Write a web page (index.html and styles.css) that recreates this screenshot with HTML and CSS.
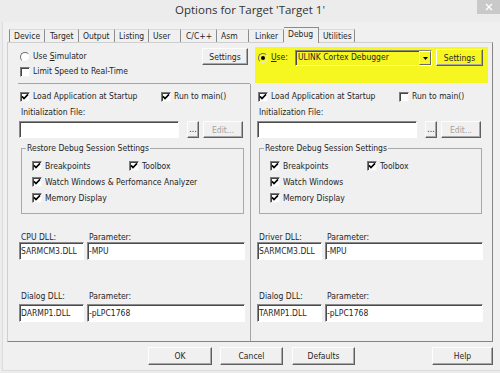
FILE: index.html
```html
<!DOCTYPE html>
<html lang="en">
<head>
<meta charset="utf-8">
<title>Options for Target 'Target 1'</title>
<link rel="stylesheet" href="styles.css">
</head>
<body>
<div class="window">
  <header class="titlebar">
    <span class="title">Options for Target 'Target 1'</span>
    <span class="close"><svg width="8" height="8" viewBox="0 0 8 8"><path d="M1 1L7 7M7 1L1 7" stroke="#fff" stroke-width="1.4"/></svg></span>
  </header>
  <div class="client">
    <nav class="tabs">
      <span class="tab">Device</span>
      <span class="tab">Target</span>
      <span class="tab">Output</span>
      <span class="tab">Listing</span>
      <span class="tab">User</span>
      <span class="tab">C/C++</span>
      <span class="tab">Asm</span>
      <span class="tab">Linker</span>
      <span class="tab sel">Debug</span>
      <span class="tab">Utilities</span>
    </nav>
    <section class="panel">
      <div class="top top-left">
        <div class="toprow">
          <span class="opt"><span class="rb"></span><span>Use <u>S</u>imulator</span></span>
          <span class="btn settings">Settings</span>
        </div>
        <span class="opt limit"><span class="cb"></span>Limit Speed to Real-Time</span>
      </div>
      <div class="top top-right">
        <div class="hl">
          <span class="rb on"><span class="dot"></span></span>
          <span class="use"><u>U</u>se:</span>
          <span class="select"><span class="sel-text">ULINK Cortex Debugger</span><span class="arrow"><svg width="5" height="3" viewBox="0 0 5 3"><path d="M0 0H5L2.5 3Z" fill="#000"/></svg></span></span>
          <span class="btn settings">Settings</span>
        </div>
      </div>

      <div class="col col-left">
        <div class="optrow">
          <span class="opt load"><span class="cb"><svg width="8" height="8" viewBox="0 0 8 8"><path d="M1 3.4L3 5.6L7 1.4" fill="none" stroke="#000" stroke-width="1.6"/></svg></span>Load Application at Startup</span>
          <span class="opt"><span class="cb"><svg width="8" height="8" viewBox="0 0 8 8"><path d="M1 3.4L3 5.6L7 1.4" fill="none" stroke="#000" stroke-width="1.6"/></svg></span>Run to main()</span>
        </div>
        <div class="lbl init">Initialization File:</div>
        <div class="filerow">
          <span class="field"></span>
          <span class="btn dots">...</span>
          <span class="btn edit">Edit...</span>
        </div>
        <fieldset class="group">
          <legend>Restore Debug Session Settings</legend>
          <div class="grow">
            <span class="opt bp"><span class="cb"><svg width="8" height="8" viewBox="0 0 8 8"><path d="M1 3.4L3 5.6L7 1.4" fill="none" stroke="#000" stroke-width="1.6"/></svg></span>Breakpoints</span>
            <span class="opt"><span class="cb"><svg width="8" height="8" viewBox="0 0 8 8"><path d="M1 3.4L3 5.6L7 1.4" fill="none" stroke="#000" stroke-width="1.6"/></svg></span>Toolbox</span>
          </div>
          <div class="grow">
            <span class="opt"><span class="cb"><svg width="8" height="8" viewBox="0 0 8 8"><path d="M1 3.4L3 5.6L7 1.4" fill="none" stroke="#000" stroke-width="1.6"/></svg></span>Watch Windows &amp; Perfomance Analyzer</span>
          </div>
          <div class="grow">
            <span class="opt"><span class="cb"><svg width="8" height="8" viewBox="0 0 8 8"><path d="M1 3.4L3 5.6L7 1.4" fill="none" stroke="#000" stroke-width="1.6"/></svg></span>Memory Display</span>
          </div>
        </fieldset>
        <div class="dll-labels first"><span>CPU DLL:</span><span>Parameter:</span></div>
        <div class="dll-fields"><span class="field">SARMCM3.DLL</span><span class="field">-MPU</span></div>
        <div class="dll-labels second"><span>Dialog DLL:</span><span>Parameter:</span></div>
        <div class="dll-fields"><span class="field">DARMP1.DLL</span><span class="field">-pLPC1768</span></div>
      </div>

      <div class="col col-right">
        <div class="optrow">
          <span class="opt load"><span class="cb"><svg width="8" height="8" viewBox="0 0 8 8"><path d="M1 3.4L3 5.6L7 1.4" fill="none" stroke="#000" stroke-width="1.6"/></svg></span>Load Application at Startup</span>
          <span class="opt"><span class="cb"></span>Run to main()</span>
        </div>
        <div class="lbl init">Initialization File:</div>
        <div class="filerow">
          <span class="field"></span>
          <span class="btn dots">...</span>
          <span class="btn edit">Edit...</span>
        </div>
        <fieldset class="group">
          <legend>Restore Debug Session Settings</legend>
          <div class="grow">
            <span class="opt bp"><span class="cb"><svg width="8" height="8" viewBox="0 0 8 8"><path d="M1 3.4L3 5.6L7 1.4" fill="none" stroke="#000" stroke-width="1.6"/></svg></span>Breakpoints</span>
            <span class="opt"><span class="cb"><svg width="8" height="8" viewBox="0 0 8 8"><path d="M1 3.4L3 5.6L7 1.4" fill="none" stroke="#000" stroke-width="1.6"/></svg></span>Toolbox</span>
          </div>
          <div class="grow">
            <span class="opt"><span class="cb"><svg width="8" height="8" viewBox="0 0 8 8"><path d="M1 3.4L3 5.6L7 1.4" fill="none" stroke="#000" stroke-width="1.6"/></svg></span>Watch Windows</span>
          </div>
          <div class="grow">
            <span class="opt"><span class="cb"><svg width="8" height="8" viewBox="0 0 8 8"><path d="M1 3.4L3 5.6L7 1.4" fill="none" stroke="#000" stroke-width="1.6"/></svg></span>Memory Display</span>
          </div>
        </fieldset>
        <div class="dll-labels first"><span>Driver DLL:</span><span>Parameter:</span></div>
        <div class="dll-fields"><span class="field">SARMCM3.DLL</span><span class="field">-MPU</span></div>
        <div class="dll-labels second"><span>Dialog DLL:</span><span>Parameter:</span></div>
        <div class="dll-fields"><span class="field">TARMP1.DLL</span><span class="field">-pLPC1768</span></div>
      </div>
    </section>
    <div class="buttons">
      <span class="btn big">OK</span>
      <span class="btn big">Cancel</span>
      <span class="btn big">Defaults</span>
      <span class="btn big help">Help</span>
    </div>
  </div>
</div>
</body>
</html>
```

FILE: styles.css
```css
* { box-sizing: border-box; }
html, body { margin: 0; padding: 0; }
body {
  width: 500px;
  height: 373px;
  overflow: hidden;
  background: #ececec;
  font-family: "DejaVu Sans Condensed", "DejaVu Sans", sans-serif;
  font-size: 8.5px;
  color: #262626;
}
u { text-decoration: underline; text-underline-offset: 1px; }

.titlebar {
  height: 22px;
  display: grid;
  grid-template-columns: 1fr auto 1fr;
}
.title {
  grid-column: 2;
  font-family: "Open Sans", "Liberation Sans", sans-serif;
  font-size: 11.5px;
  line-height: 20px;
  color: #333;
}
.close {
  grid-column: 3;
  justify-self: end;
  align-self: start;
  width: 23px;
  height: 14px;
  background: #c9c9c9;
  display: flex;
  align-items: center;
  justify-content: center;
}

.client {
  height: 349px;
  margin-left: 2px;
  border-left: 1px solid #dcdcdc;
  border-bottom: 1px solid #dcdcdc;
  background: #f0f0f0;
  padding: 7px 7px 0 4px;
}

/* tabs */
.tabs {
  display: flex;
  align-items: flex-end;
  height: 13px;
  margin-left: 2px;
}
.tab {
  height: 13px;
  line-height: 12px;
  padding-left: 4px;
  white-space: nowrap;
  border-top: 1px solid #dadada;
  border-right: 1px solid #8c8c8c;
}
.tab:nth-child(1) { width: 36px; border-left: 1px solid #8c8c8c; }
.tab:nth-child(2) { width: 34px; padding-left: 5px; }
.tab:nth-child(3) { width: 36px; }
.tab:nth-child(4) { width: 34px; }
.tab:nth-child(5) { width: 32px; }
.tab:nth-child(6) { width: 36px; padding-left: 5px; }
.tab:nth-child(7) { width: 32px; }
.tab:nth-child(8) { width: 35px; padding-left: 6px; }
.tab:nth-child(9) { width: 35px; }
.tab:nth-child(10) { width: 36px; }
.tab.sel {
  height: 16px;
  line-height: 13px;
  margin-bottom: -1px;
  background: #f0f0f0;
  border-top-color: #8c8c8c;
  position: relative;
  z-index: 1;
}

/* panel */
.panel {
  height: 300px;
  border: 1px solid;
  border-color: #cfcfcf #858585 #858585 #cfcfcf;
  display: grid;
  grid-template-columns: 242px 1fr;
  grid-template-rows: 41px 1fr;
}
.top-left {
  margin-left: 10px;
  border-bottom: 1px solid #a3a3a3;
  padding: 5px 2px 0 2px;
  display: flex;
  flex-direction: column;
}
.toprow {
  height: 17px;
  display: flex;
  align-items: center;
  justify-content: space-between;
}
.limit { margin-top: 1px; height: 11px; }

.hl {
  margin: 4px 4px 0 5px;
  height: 36px;
  background: #f6f620;
  display: flex;
  align-items: flex-start;
  padding: 2px 4px 0 3px;
}
.hl .rb { margin-top: 4px; background: transparent; }
.use { width: 24px; line-height: 17px; margin-left: 3px; }
.select {
  width: 137px;
  height: 16px;
  margin-top: 1px;
  display: flex;
  border: 1px solid;
  border-color: #8a8a8a #fff #fff #8a8a8a;
  box-shadow: inset 1px 1px 0 #4a4a4a;
}
.sel-text { flex: 1; padding-left: 2px; line-height: 13px; }
.arrow {
  width: 12px;
  display: flex;
  align-items: center;
  justify-content: center;
  border: 1px solid;
  border-color: #fff #6a6a6a #6a6a6a #fff;
}
.hl .settings { width: 47px; margin-left: 4px; background: transparent; }

.col { display: flex; flex-direction: column; }
.col-left { padding: 0 5px 0 11px; }
.col-right { border-left: 1px solid #a3a3a3; padding: 0 9px 0 6px; }

/* controls */
.opt {
  display: inline-flex;
  align-items: center;
  height: 11px;
  line-height: 11px;
  white-space: nowrap;
}
.cb {
  flex: none;
  width: 10px;
  height: 10px;
  margin-right: 3px;
  background: #fff;
  border: 1px solid;
  border-color: #7b7b7b #f4f4f4 #f4f4f4 #7b7b7b;
  box-shadow: inset 1px 1px 0 #454545;
  display: inline-flex;
  align-items: center;
  justify-content: center;
}
.cb svg { display: block; }
.rb {
  flex: none;
  width: 10px;
  height: 10px;
  margin-right: 3px;
  border-radius: 50%;
  background: #fff;
  border: 1px solid;
  border-color: #6e6e6e #e8e8e8 #e8e8e8 #6e6e6e;
  display: inline-flex;
  align-items: center;
  justify-content: center;
}
.rb .dot { width: 4px; height: 4px; border-radius: 50%; background: #000; }
.rb.on { margin-right: 0; }

.btn {
  display: inline-flex;
  align-items: center;
  justify-content: center;
  background: #f0f0f0;
  border: 1px solid;
  border-color: #fdfdfd #5f5f5f #5f5f5f #fdfdfd;
  box-shadow: inset -1px -1px 0 #a8a8a8;
  white-space: nowrap;
}
.settings { width: 46px; height: 17px; }

.optrow { margin-top: 7px; padding-left: 1px; display: flex; }
.load { width: 141px; }

.lbl { padding-left: 2px; line-height: 11px; height: 11px; }
.init { margin-top: 5px; }

.field {
  display: flex;
  align-items: center;
  background: #fff;
  border: 1px solid;
  border-color: #8a8a8a #fff #fff #8a8a8a;
  box-shadow: inset 1px 1px 0 #4a4a4a;
  padding-left: 1px;
  white-space: nowrap;
  overflow: hidden;
}
.filerow {
  margin: 3px 2px 0 0;
  height: 17px;
  display: flex;
}
.filerow .field { flex: 1; }
.dots { width: 12px; margin-left: 8px; padding-bottom: 3px; align-items: flex-end; }
.edit { width: 40px; margin-left: 4px; color: #a3a3a3; }

.group {
  margin: 4px 1px 0 2px;
  padding: 4px 0 7px 4px;
  border: 1px solid #a9a9a9;
  min-width: 0;
}
.group legend {
  padding: 0 1px;
  line-height: 12px;
}
.grow { height: 16px; display: flex; align-items: center; padding-left: 6px; }
.bp { width: 97px; }

.dll-labels {
  display: grid;
  grid-template-columns: 65px 1fr;
  column-gap: 3px;
  height: 10px;
  line-height: 10px;
}
.dll-labels span { padding-left: 2px; }
.dll-labels.first { margin-top: 18px; }
.dll-labels.second { margin-top: 31px; }
.dll-fields {
  display: grid;
  grid-template-columns: 65px 1fr;
  column-gap: 3px;
  height: 18px;
}
.dll-labels.second + .dll-fields { margin-top: 3px; }

.buttons {
  margin-top: 5px;
  padding-left: 141px;
  display: flex;
}
.big { width: 63px; height: 18px; }
.big:first-child { width: 64px; }
.big + .big { margin-left: 8px; }
.big:nth-child(3) { margin-left: 9px; }
.big.help { margin-left: auto; width: 61px; }
```
